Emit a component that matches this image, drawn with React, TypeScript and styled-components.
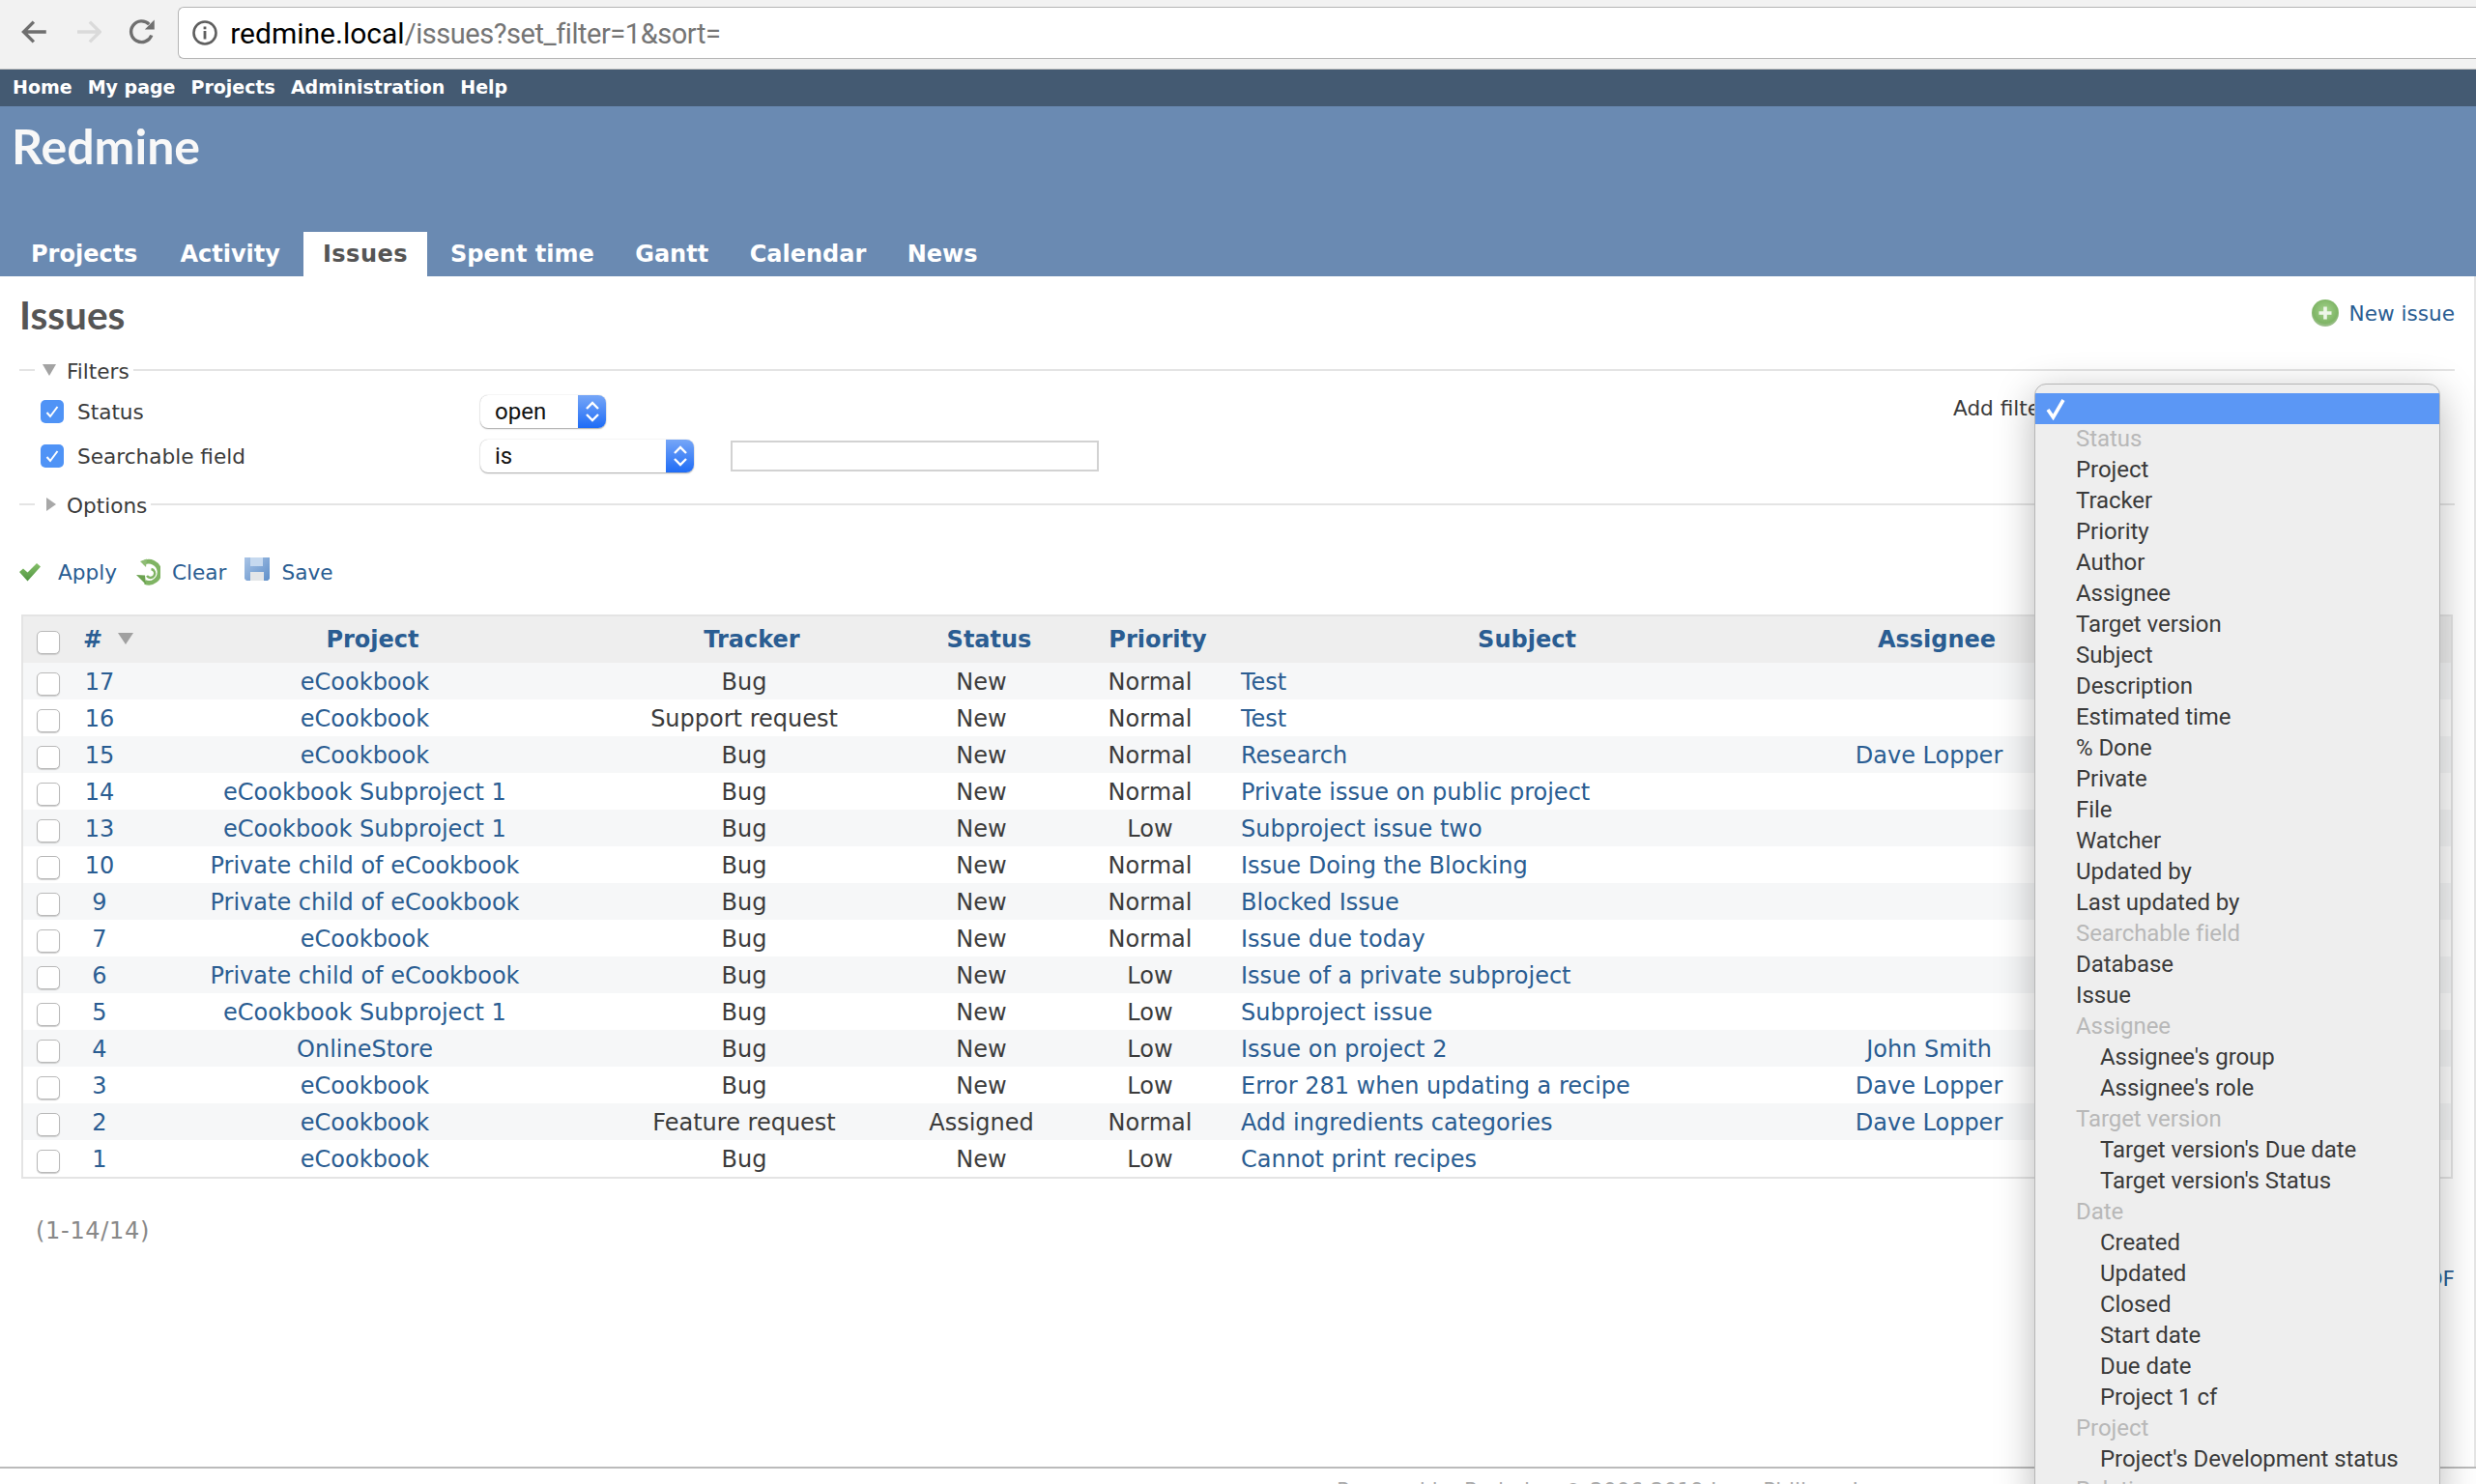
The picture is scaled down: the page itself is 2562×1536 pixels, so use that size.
import styled, { createGlobalStyle } from "styled-components";

const GlobalStyle = createGlobalStyle`
  html, body {
    margin: 0;
    padding: 0;
    background: #fff;
    overflow: hidden;
  }
  * {
    box-sizing: border-box;
  }
`;

const issues = [
  { id: 17, project: "eCookbook", tracker: "Bug", status: "New", priority: "Normal", subject: "Test", assignee: "" },
  { id: 16, project: "eCookbook", tracker: "Support request", status: "New", priority: "Normal", subject: "Test", assignee: "" },
  { id: 15, project: "eCookbook", tracker: "Bug", status: "New", priority: "Normal", subject: "Research", assignee: "Dave Lopper" },
  { id: 14, project: "eCookbook Subproject 1", tracker: "Bug", status: "New", priority: "Normal", subject: "Private issue on public project", assignee: "" },
  { id: 13, project: "eCookbook Subproject 1", tracker: "Bug", status: "New", priority: "Low", subject: "Subproject issue two", assignee: "" },
  { id: 10, project: "Private child of eCookbook", tracker: "Bug", status: "New", priority: "Normal", subject: "Issue Doing the Blocking", assignee: "" },
  { id: 9, project: "Private child of eCookbook", tracker: "Bug", status: "New", priority: "Normal", subject: "Blocked Issue", assignee: "" },
  { id: 7, project: "eCookbook", tracker: "Bug", status: "New", priority: "Normal", subject: "Issue due today", assignee: "" },
  { id: 6, project: "Private child of eCookbook", tracker: "Bug", status: "New", priority: "Low", subject: "Issue of a private subproject", assignee: "" },
  { id: 5, project: "eCookbook Subproject 1", tracker: "Bug", status: "New", priority: "Low", subject: "Subproject issue", assignee: "" },
  { id: 4, project: "OnlineStore", tracker: "Bug", status: "New", priority: "Low", subject: "Issue on project 2", assignee: "John Smith" },
  { id: 3, project: "eCookbook", tracker: "Bug", status: "New", priority: "Low", subject: "Error 281 when updating a recipe", assignee: "Dave Lopper" },
  { id: 2, project: "eCookbook", tracker: "Feature request", status: "Assigned", priority: "Normal", subject: "Add ingredients categories", assignee: "Dave Lopper" },
  { id: 1, project: "eCookbook", tracker: "Bug", status: "New", priority: "Low", subject: "Cannot print recipes", assignee: "" },
];

const columns = [
  { label: "Project", width: 495 },
  { label: "Tracker", width: 290 },
  { label: "Status", width: 201 },
  { label: "Priority", width: 148 },
  { label: "Subject", width: 616 },
  { label: "Assignee", width: 232 },
];

const filterOptions: { label: string; kind?: "off" | "sub" }[] = [
  { label: "Status", kind: "off" },
  { label: "Project" },
  { label: "Tracker" },
  { label: "Priority" },
  { label: "Author" },
  { label: "Assignee" },
  { label: "Target version" },
  { label: "Subject" },
  { label: "Description" },
  { label: "Estimated time" },
  { label: "% Done" },
  { label: "Private" },
  { label: "File" },
  { label: "Watcher" },
  { label: "Updated by" },
  { label: "Last updated by" },
  { label: "Searchable field", kind: "off" },
  { label: "Database" },
  { label: "Issue" },
  { label: "Assignee", kind: "off" },
  { label: "Assignee's group", kind: "sub" },
  { label: "Assignee's role", kind: "sub" },
  { label: "Target version", kind: "off" },
  { label: "Target version's Due date", kind: "sub" },
  { label: "Target version's Status", kind: "sub" },
  { label: "Date", kind: "off" },
  { label: "Created", kind: "sub" },
  { label: "Updated", kind: "sub" },
  { label: "Closed", kind: "sub" },
  { label: "Start date", kind: "sub" },
  { label: "Due date", kind: "sub" },
  { label: "Project 1 cf", kind: "sub" },
  { label: "Project", kind: "off" },
  { label: "Project's Development status", kind: "sub" },
  { label: "Relations", kind: "off" },
];

function Stepper() {
  return (
    <StepperBox>
      <svg width="18" height="28" viewBox="0 0 18 28" fill="none" stroke="#fff" strokeWidth="2.4">
        <path d="M3 11 L9 5 L15 11" />
        <path d="M3 17 L9 23 L15 17" />
      </svg>
    </StepperBox>
  );
}

function Tick() {
  return (
    <svg width="16" height="16" viewBox="0 0 16 16" fill="none" stroke="#fff" strokeWidth="2">
      <path d="M2.5 9 L6 13 L13.5 3" />
    </svg>
  );
}

export default function App() {
  return (
    <Root>
      <GlobalStyle />
      <BrowserBar>
        <NavIcon viewBox="0 0 28 28" stroke="#6f6f6f">
          <path d="M26 14 H3 M13 3.5 L2.5 14 L13 24.5" />
        </NavIcon>
        <NavIcon viewBox="0 0 28 28" stroke="#dadada">
          <path d="M2 14 H25 M15 3.5 L25.5 14 L15 24.5" />
        </NavIcon>
        <NavIcon viewBox="0 0 28 28" stroke="#6f6f6f">
          <path d="M24 17.5 A11 11 0 1 1 21.5 6" />
          <path d="M27 1.5 V11.5 H17 Z" fill="#6f6f6f" stroke="none" />
        </NavIcon>
        <AddressBox>
          <svg width="26" height="26" viewBox="0 0 26 26" fill="none">
            <circle cx="13" cy="13" r="11.5" stroke="#5f5f5f" strokeWidth="2.6" />
            <rect x="11.6" y="11" width="2.8" height="8.5" fill="#5f5f5f" />
            <rect x="11.6" y="6.5" width="2.8" height="2.8" fill="#5f5f5f" />
          </svg>
          <UrlText>
            <UrlHost>redmine.local</UrlHost>/issues?set_filter=1&amp;sort=
          </UrlText>
        </AddressBox>
      </BrowserBar>

      <TopMenu>
        <TopLink>Home</TopLink>
        <TopLink>My page</TopLink>
        <TopLink>Projects</TopLink>
        <TopLink>Administration</TopLink>
        <TopLink>Help</TopLink>
      </TopMenu>

      <Header>
        <SiteTitle>Redmine</SiteTitle>
        <Tabs>
          <Tab>Projects</Tab>
          <Tab>Activity</Tab>
          <Tab $selected>Issues</Tab>
          <Tab>Spent time</Tab>
          <Tab>Gantt</Tab>
          <Tab>Calendar</Tab>
          <Tab>News</Tab>
        </Tabs>
      </Header>

      <Main>
        <TitleRow>
          <PageTitle>Issues</PageTitle>
          <NewIssue>
            <svg width="30" height="30" viewBox="0 0 30 30">
              <defs>
                <radialGradient id="addGreen" cx="50%" cy="42%" r="60%">
                  <stop offset="0%" stopColor="#a5d48d" />
                  <stop offset="75%" stopColor="#7fb566" />
                  <stop offset="100%" stopColor="#a9c49c" />
                </radialGradient>
              </defs>
              <circle cx="15" cy="15" r="14" fill="url(#addGreen)" />
              <path d="M15 8.5 V21.5 M8.5 15 H21.5" stroke="#eef6e9" strokeWidth="3.6" />
            </svg>
            New issue
          </NewIssue>
        </TitleRow>

        <Legend>
          <LegendDash />
          <svg width="14" height="12" viewBox="0 0 14 12">
            <path d="M0 0 H14 L7 12 Z" fill="#a3a3a3" />
          </svg>
          <LegendLabel>Filters</LegendLabel>
          <LegendLine />
        </Legend>

        <FilterRow>
          <FilterName>
            <CheckedBox>
              <Tick />
            </CheckedBox>
            Status
          </FilterName>
          <SelectBox $width={130}>
            <SelectText>open</SelectText>
            <Stepper />
          </SelectBox>
          <AddFilter>Add filter</AddFilter>
        </FilterRow>
        <FilterRow>
          <FilterName>
            <CheckedBox>
              <Tick />
            </CheckedBox>
            Searchable field
          </FilterName>
          <SelectBox $width={221}>
            <SelectText>is</SelectText>
            <Stepper />
          </SelectBox>
          <ValueInput />
        </FilterRow>

        <OptionsLegend>
          <LegendDash />
          <svg width="14" height="14" viewBox="0 0 14 14">
            <path d="M4 0 L14 7 L4 14 Z" fill="#a8a8a8" />
          </svg>
          <LegendLabel>Options</LegendLabel>
          <LegendLine />
        </OptionsLegend>

        <Buttons>
          <ApplyLink>
            <svg width="22" height="20" viewBox="0 0 22 20">
              <defs>
                <linearGradient id="tickGreen" x1="0" y1="0" x2="0" y2="1">
                  <stop offset="0%" stopColor="#86c06a" />
                  <stop offset="100%" stopColor="#4f9440" />
                </linearGradient>
              </defs>
              <path d="M0 10 L4 6.5 L8.5 10.5 L18 1 L22 4.5 L8.5 19.5 Z" fill="url(#tickGreen)" />
            </svg>
            Apply
          </ApplyLink>
          <ActionLink>
            <svg width="26" height="28" viewBox="0 0 26 28" fill="none">
              <path d="M8 5 A11 11 0 1 1 10 24.5" stroke="#7fb463" strokeWidth="4.6" />
              <path d="M16.5 11 A4.5 4.5 0 1 1 12 18" stroke="#7fb463" strokeWidth="2.4" />
              <path d="M1 17 L10 17.5 L11 27 Z" fill="#6ba24f" />
              <path d="M5 3 L12 0.5 L11 9 Z" fill="#8fbd75" />
            </svg>
            Clear
          </ActionLink>
          <SaveLink>
            <svg width="26" height="24" viewBox="0 0 26 24">
              <defs>
                <linearGradient id="diskBlue" x1="0" y1="0" x2="1" y2="1">
                  <stop offset="0%" stopColor="#a9c4e6" />
                  <stop offset="100%" stopColor="#5f8fc9" />
                </linearGradient>
              </defs>
              <path d="M0 0 H26 V22 L24 24 H2 L0 22 Z" fill="url(#diskBlue)" />
              <rect x="6" y="0" width="13" height="9" fill="#c6d9ef" />
              <rect x="6" y="15" width="14" height="9" fill="#e4e6e8" />
            </svg>
            Save
          </SaveLink>
        </Buttons>

        <TableFrame>
          <IssueTable>
            <colgroup>
              <col style={{ width: 52 }} />
              <col style={{ width: 54 }} />
              {columns.map((c) => (
                <col key={c.label} style={{ width: c.width }} />
              ))}
              <col />
            </colgroup>
            <thead>
              <tr>
                <CheckHead>
                  <RowCheck />
                </CheckHead>
                <IdHead>
                  #
                  <SortMark width="16" height="12" viewBox="0 0 16 12">
                    <path d="M0 0 H16 L8 12 Z" fill="#a0a0a0" />
                  </SortMark>
                </IdHead>
                {columns.map((c) => (
                  <HeadCell key={c.label}>{c.label}</HeadCell>
                ))}
                <HeadCell />
              </tr>
            </thead>
            <tbody>
              {issues.map((row, i) => (
                <Row key={row.id} $odd={i % 2 === 0}>
                  <CheckCell>
                    <RowCheck />
                  </CheckCell>
                  <LinkCell>{row.id}</LinkCell>
                  <LinkCell>{row.project}</LinkCell>
                  <Cell>{row.tracker}</Cell>
                  <Cell>{row.status}</Cell>
                  <Cell>{row.priority}</Cell>
                  <SubjectCell>{row.subject}</SubjectCell>
                  <LinkCell>{row.assignee}</LinkCell>
                  <Cell />
                </Row>
              ))}
            </tbody>
          </IssueTable>
        </TableFrame>

        <Pagination>(1-14/14)</Pagination>
        <OtherFormats>Also available in: Atom | CSV | PDF</OtherFormats>
      </Main>

      <Footer>Powered by Redmine © 2006-2019 Jean-Philippe Lang</Footer>

      <FilterMenu>
        <MenuSelected>
          <svg width="22" height="24" viewBox="0 0 22 24" fill="none" stroke="#fff" strokeWidth="3.6">
            <path d="M3 13 L8.5 21 L19 3" />
          </svg>
        </MenuSelected>
        {filterOptions.map((o, i) => (
          <MenuItem key={i} $kind={o.kind}>
            {o.label}
          </MenuItem>
        ))}
      </FilterMenu>
    </Root>
  );
}

const Root = styled.div`
  position: relative;
  width: 2562px;
  height: 1536px;
  overflow: hidden;
  display: flex;
  flex-direction: column;
  background: #fff;
  color: #3b3b3b;
  font-family: "DejaVu Sans", Verdana, sans-serif;
  font-size: 24px;
`;

const BrowserBar = styled.div`
  height: 72px;
  flex: none;
  display: flex;
  align-items: flex-start;
  padding: 7px 0 0 22px;
  gap: 28px;
  background: #f2f2f2;
  border-bottom: 1px solid #c4c4c4;
`;

const NavIcon = styled.svg`
  width: 28px;
  height: 28px;
  margin-top: 12px;
  fill: none;
  stroke-width: 3.4;
`;

const AddressBox = styled.div`
  width: 2400px;
  height: 54px;
  margin-left: -5px;
  display: flex;
  align-items: center;
  gap: 13px;
  padding-left: 14px;
  background: #fff;
  border: 1px solid #b4b4b4;
  border-right: none;
  border-radius: 6px 0 0 6px;
`;

const UrlText = styled.span`
  font-family: Roboto, "Liberation Sans", sans-serif;
  font-size: 29px;
  letter-spacing: -0.45px;
  color: #757575;
`;

const UrlHost = styled.span`
  font-size: 30px;
  letter-spacing: 0;
  color: #000;
`;

const TopMenu = styled.div`
  height: 38px;
  flex: none;
  display: flex;
  align-items: center;
  gap: 16px;
  padding: 0 0 3px 13px;
  background: #445a72;
`;

const TopLink = styled.a`
  color: #fff;
  font-size: 19px;
  font-weight: 700;
`;

const Header = styled.div`
  height: 176px;
  flex: none;
  display: flex;
  flex-direction: column;
  justify-content: space-between;
  padding: 8px 0 0 12px;
  background: #6a8ab2;
`;

const SiteTitle = styled.div`
  font-family: Lato, "Open Sans", sans-serif;
  font-size: 50px;
  font-weight: 700;
  line-height: 66px;
  color: #f8f8f8;
`;

const Tabs = styled.div`
  display: flex;
  gap: 4px;
`;

const Tab = styled.a<{ $selected?: boolean }>`
  height: 46px;
  padding: 0 20px;
  line-height: 46px;
  font-size: 24px;
  font-weight: 700;
  letter-spacing: ${(p) => (p.$selected ? "0.5px" : "0")};
  color: ${(p) => (p.$selected ? "#555" : "#fff")};
  background: ${(p) => (p.$selected ? "#fff" : "transparent")};
  &:nth-child(n + 5) {
    margin-left: -1.5px;
  }
`;

const Main = styled.div`
  flex: 1;
  min-height: 0;
  padding: 14px 20px 0 20px;
  border-right: 2px solid #e6e6e6;
`;

const TitleRow = styled.div`
  height: 50px;
  display: flex;
  align-items: center;
  justify-content: space-between;
`;

const PageTitle = styled.h2`
  margin: 0;
  font-family: Lato, "Open Sans", sans-serif;
  font-size: 40.5px;
  font-weight: 700;
  color: #555;
`;

const NewIssue = styled.a`
  display: flex;
  align-items: center;
  gap: 10px;
  padding-bottom: 2px;
  font-size: 21.6px;
  color: #2a5d92;
`;

const Legend = styled.div`
  height: 30px;
  margin-top: 18px;
  display: flex;
  align-items: center;
  font-size: 21.6px;
`;

const OptionsLegend = styled(Legend)`
  margin-top: 12px;
`;

const LegendDash = styled.div`
  width: 16px;
  height: 2px;
  margin-right: 8px;
  background: #e4e4e4;
`;

const LegendLabel = styled.span`
  margin-left: 11px;
  padding-top: 2px;
  color: #3b3b3b;
`;

const LegendLine = styled.div`
  flex: 1;
  height: 2px;
  margin-left: 4px;
  background: #e4e4e4;
`;

const FilterRow = styled.div`
  height: 46px;
  padding-left: 22px;
  display: flex;
  align-items: center;
  ${Legend} + & {
    margin-top: 5px;
  }
`;

const FilterName = styled.label`
  width: 455px;
  flex: none;
  display: flex;
  align-items: center;
  gap: 14px;
  font-size: 21.6px;
`;

const CheckedBox = styled.span`
  width: 24px;
  height: 24px;
  display: flex;
  align-items: center;
  justify-content: center;
  border-radius: 5px;
  background: #4f93f6;
`;

const SelectBox = styled.div<{ $width: number }>`
  width: ${(p) => p.$width}px;
  height: 34px;
  display: flex;
  align-items: stretch;
  background: #fff;
  border-radius: 8px;
  box-shadow: 0 0 1px #b0b0b0, 0 1px 1.5px #a8a8a8;
  overflow: hidden;
`;

const SelectText = styled.span`
  flex: 1;
  padding-left: 15px;
  font-family: Roboto, "Liberation Sans", sans-serif;
  font-size: 24px;
  line-height: 34px;
  color: #111;
`;

const StepperBox = styled.span`
  width: 29px;
  display: flex;
  align-items: center;
  justify-content: center;
  background: linear-gradient(#76a6f7, #1f6cf6);
`;

const ValueInput = styled.input`
  width: 381px;
  height: 32px;
  margin-left: 38px;
  padding: 0;
  background: #fff;
  border: 2px solid #d2d2d2;
  border-radius: 0;
`;

const AddFilter = styled.span`
  margin-left: auto;
  width: 519px;
  font-size: 21.6px;
  margin-top: -8px;
`;

const Buttons = styled.div`
  height: 40px;
  margin-top: 35px;
  display: flex;
  align-items: center;
  gap: 19px;
`;

const ActionLink = styled.a`
  display: flex;
  align-items: center;
  gap: 12px;
  font-size: 21.6px;
  color: #2a5d92;
`;

const ApplyLink = styled(ActionLink)`
  gap: 18px;
`;

const SaveLink = styled(ActionLink)`
  svg {
    margin-bottom: 6px;
  }
`;

const TableFrame = styled.div`
  margin: 24px 2px 0 2px;
  border: 2px solid #e4e4e4;
`;

const IssueTable = styled.table`
  width: 100%;
  table-layout: fixed;
  border-collapse: collapse;
`;

const HeadCell = styled.th`
  height: 48px;
  padding: 0 0 0 16px;
  background: #eeeeee;
  color: #2a5d92;
  font-size: 24px;
  font-weight: 700;
  text-align: center;
`;

const CheckHead = styled(HeadCell)`
  padding: 0;
`;

const IdHead = styled(HeadCell)`
  padding: 0 0 0 10px;
  text-align: left;
  white-space: nowrap;
`;

const SortMark = styled.svg`
  margin-left: 16px;
  margin-bottom: 3px;
`;

const Row = styled.tr<{ $odd: boolean }>`
  height: 38px;
  background: ${(p) => (p.$odd ? "#f6f7f8" : "#fff")};
`;

const Cell = styled.td`
  padding: 2px 0 0 0;
  text-align: center;
  white-space: nowrap;
  color: #3b3b3b;
`;

const CheckCell = styled(Cell)`
  padding: 0;
`;

const LinkCell = styled(Cell)`
  color: #2a5d92;
`;

const SubjectCell = styled(LinkCell)`
  padding-left: 20px;
  text-align: left;
`;

const RowCheck = styled.span`
  display: inline-block;
  width: 24px;
  height: 24px;
  margin-top: 6px;
  vertical-align: middle;
  background: #fff;
  border: 1px solid #b9b9b9;
  border-radius: 5px;
  box-shadow: 0 1px 1px #ccc;
`;

const Pagination = styled.div`
  height: 30px;
  margin-top: 39px;
  padding-left: 17px;
  line-height: 30px;
  letter-spacing: 0.7px;
  color: #888;
`;

const OtherFormats = styled.div`
  height: 30px;
  margin-top: 20px;
  line-height: 30px;
  font-size: 21.6px;
  text-align: right;
  color: #2a5d92;
`;

const Footer = styled.div`
  height: 18px;
  flex: none;
  overflow: hidden;
  padding: 10px 0 0 1383px;
  border-top: 2px solid #bbb;
  font-size: 21.6px;
  line-height: 26px;
  color: #aaa;
  white-space: nowrap;
`;

const FilterMenu = styled.div`
  position: absolute;
  left: 2105px;
  top: 397px;
  width: 420px;
  height: 1160px;
  padding-top: 9px;
  overflow: hidden;
  background: #eeeeee;
  border: 1px solid #b6b6b6;
  border-radius: 12px 12px 0 0;
  box-shadow: 0 10px 40px rgba(0, 0, 0, 0.28);
  font-family: Roboto, "Liberation Sans", sans-serif;
  font-size: 24px;
  letter-spacing: -0.06px;
`;

const MenuSelected = styled.div`
  height: 32px;
  display: flex;
  align-items: center;
  padding-left: 10px;
  background: #5b97f5;
`;

const MenuItem = styled.div<{ $kind?: "off" | "sub" }>`
  height: 32px;
  line-height: 31px;
  white-space: nowrap;
  padding-left: ${(p) => (p.$kind === "sub" ? 67 : 42)}px;
  color: ${(p) => (p.$kind === "off" ? "#b8b8b8" : "#3a3a3a")};
`;
